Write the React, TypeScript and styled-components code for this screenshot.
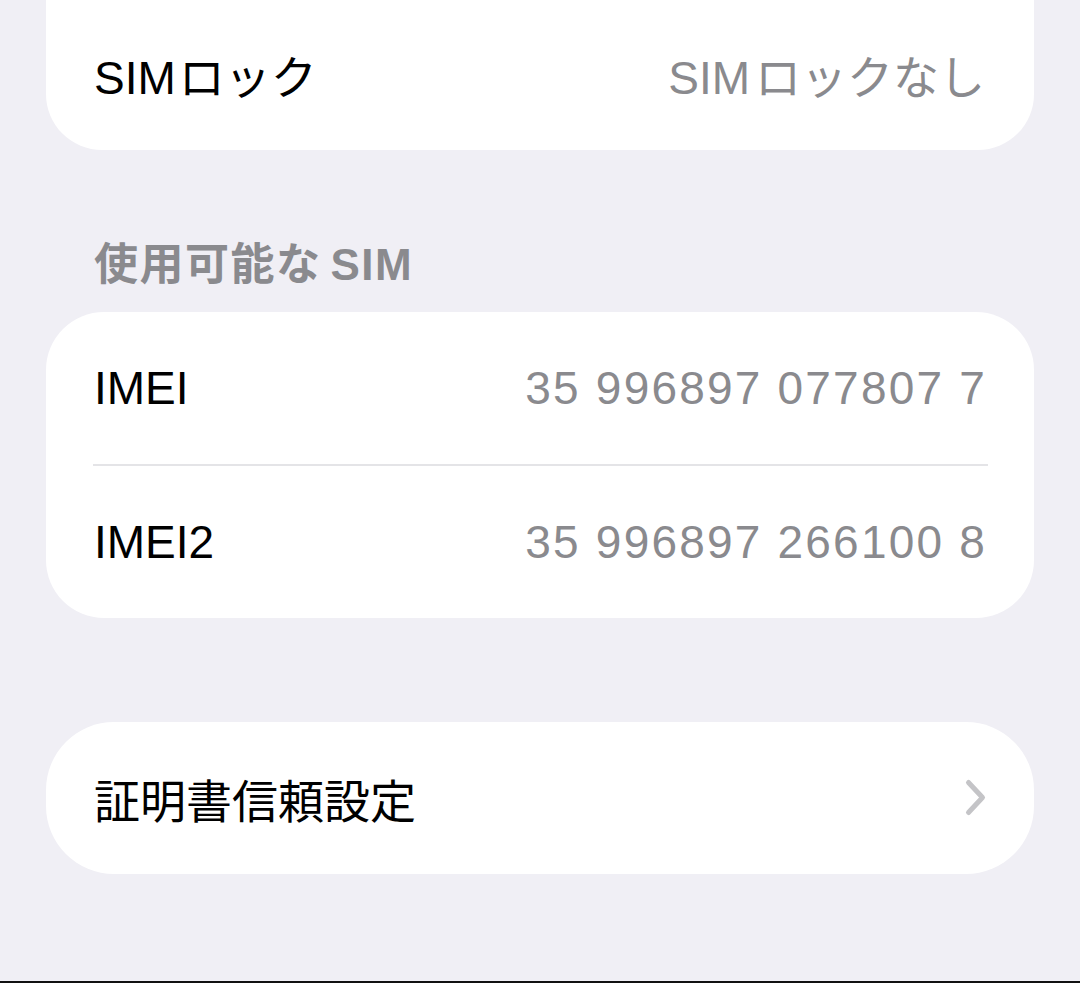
import React from "react";
import styled, { createGlobalStyle } from "styled-components";

const GlobalStyle = createGlobalStyle`
  html, body {
    margin: 0;
    padding: 0;
    background-color: #f0eff5;
  }
  body {
    font-family: "Liberation Sans", "Noto Sans CJK JP", sans-serif;
  }
`;

const Page = styled.div`
  min-height: 983px;
  display: flex;
  flex-direction: column;
  background-color: #f0eff5;
`;
const Card = styled.section<{ $cutTop?: boolean; $radius?: number }>`
  margin: ${(p) => (p.$cutTop ? "-2px" : "0")} 46px 0 46px;
  background-color: #ffffff;
  border-radius: ${(p) =>
    p.$cutTop ? "0 0 56px 56px" : `${p.$radius ?? 58}px`};
  overflow: hidden;
`;
const Row = styled.div`
  height: 152px;
  padding: 0 49px 0 48px;
  display: flex;
  align-items: center;
  justify-content: space-between;
`;
const Label = styled.span`
  font-size: 46px;
  color: #000000;
  font-family: "Liberation Sans", "Noto Sans CJK JP", sans-serif;
`;
const Value = styled.span<{ $digits?: boolean }>`
  font-size: 46px;
  color: #8a8a8e;
  letter-spacing: ${(p) => (p.$digits ? "2.2px" : "0")};
  margin-right: ${(p) => (p.$digits ? "-2px" : "0")};
  font-family: "Liberation Sans", "Noto Sans CJK JP", sans-serif;
`;
const Latin = styled.span<{ $gap: number }>`
  margin-right: ${(p) => p.$gap}px;
`;
const Divider = styled.div`
  height: 2px;
  margin: 0 46px 0 47px;
  background-color: #e4e4e7;
`;
const SectionHeader = styled.h2`
  margin: 93px 0 25px 94px;
  font-size: 44px;
  line-height: 44px;
  font-weight: 700;
  letter-spacing: 1.5px;
  color: #8a8a8e;
  font-family: "Liberation Sans", "Noto Sans CJK JP", sans-serif;
`;
const HeaderLatin = styled.span`
  margin-left: 9px;
`;
const Spacer = styled.div<{ $h: number }>`
  height: ${(p) => p.$h}px;
`;
const BottomEdge = styled.div`
  margin-top: auto;
  height: 2px;
  background-color: #111111;
`;

const Chevron = () => (
  <svg width="24" height="40" viewBox="0 0 24 40" style={{ marginRight: -3 }}>
    <path
      d="M4.5 4.5 L18.5 19.5 L4.5 34.5"
      fill="none"
      stroke="#c4c4c7"
      strokeWidth="5"
      strokeLinecap="round"
      strokeLinejoin="round"
    />
  </svg>
);

const App = (): JSX.Element => {
  return (
    <Page>
      <GlobalStyle />
      <Card $cutTop>
        <Row>
          <Label>
            <Latin $gap={3}>SIM</Latin>ロック
          </Label>
          <Value>
            <Latin $gap={5}>SIM</Latin>ロックなし
          </Value>
        </Row>
      </Card>

      <SectionHeader>
        使用可能な<HeaderLatin>SIM</HeaderLatin>
      </SectionHeader>
      <Card>
        <Row>
          <Label>IMEI</Label>
          <Value $digits>35 996897 077807 7</Value>
        </Row>
        <Divider />
        <Row>
          <Label>IMEI2</Label>
          <Value $digits>35 996897 266100 8</Value>
        </Row>
      </Card>

      <Spacer $h={104} />
      <Card $radius={68}>
        <Row>
          <Label>証明書信頼設定</Label>
          <Chevron />
        </Row>
      </Card>

      <BottomEdge />
    </Page>
  );
};
export default App;
